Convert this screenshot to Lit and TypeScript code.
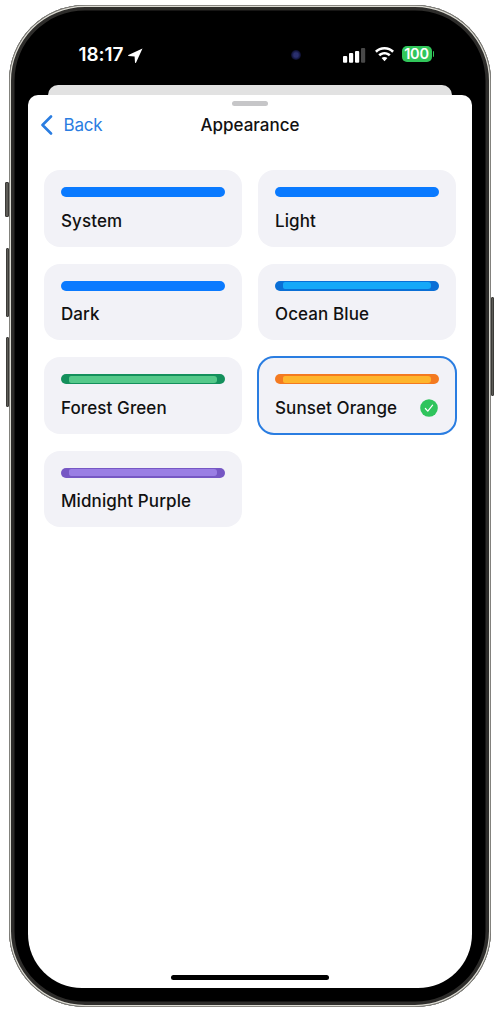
import { LitElement, html, css } from "lit";
import { customElement } from "lit/decorators.js";

type Theme = { name: string; outer: string; inner?: string; selected?: boolean };

const THEMES: Theme[] = [
  { name: "System", outer: "#0a7aff" },
  { name: "Light", outer: "#0a7aff" },
  { name: "Dark", outer: "#0a7aff" },
  { name: "Ocean Blue", outer: "#0a6fd6", inner: "#16a8f8" },
  { name: "Forest Green", outer: "#14905c", inner: "#55c98a" },
  { name: "Sunset Orange", outer: "#f47a20", inner: "#feb52c", selected: true },
  { name: "Midnight Purple", outer: "#7657c4", inner: "#9a7ee4" },
];

@customElement("app-root")
export class AppRoot extends LitElement {
  static styles = css`
    :host {
      display: block;
      width: 500px;
      height: 1013px;
      background: #fff;
      font-family: Inter, "Liberation Sans", sans-serif;
      overflow: hidden;
    }
    .stage {
      position: relative;
      width: 500px;
      height: 1013px;
      padding: 4.5px 9px 6px;
      box-sizing: border-box;
    }
    .phone {
      height: 100%;
      box-sizing: border-box;
      border-radius: 76px;
      background: #000;
      padding: 0 19px 19px;
      display: flex;
      flex-direction: column;
      box-shadow: inset 0 0 0 0.8px #6d6c68, inset 0 0 0 2px #dcdbd3, inset 0 0 0 5.5px #2e2d2b;
    }
    .side {
      position: absolute;
      background: #5c5b56;
      border: 1px solid #3c3b38;
      box-sizing: border-box;
      border-radius: 1px;
    }
    .btn-mute { left: 5px; top: 182px; width: 4px; height: 35px; }
    .btn-up { left: 6px; top: 248px; width: 3px; height: 69px; }
    .btn-down { left: 6px; top: 337px; width: 3px; height: 70px; }
    .btn-power { left: 491px; top: 297px; width: 3px; height: 99px; }
    .status {
      height: 80.5px;
      flex: none;
      display: flex;
      align-items: flex-start;
      padding-top: 40px;
      box-sizing: border-box;
      color: #fff;
    }
    .time {
      margin-left: 50.5px;
      width: 45.5px;
      font-size: 19px;
      line-height: 20px;
      font-weight: 600;
      letter-spacing: -0.1px;
    }
    .arrow { margin-left: 3.5px; margin-top: 3px; }
    .island { flex: 1; display: flex; justify-content: flex-end; padding-right: 42px; padding-top: 5px; }
    .cam { width: 10px; height: 10px; border-radius: 50%; background: radial-gradient(circle, #2a2f6e 0 30%, #0a0c2a 70%); }
    .signal { margin-top: 1px; }
    .wifi { margin-left: 8px; margin-top: 2px; }
    .battery {
      margin-left: 7px;
      margin-right: 40.5px;
      margin-top: 1.5px;
      width: 30px;
      height: 16px;
      border-radius: 5px;
      background: #31c65a;
      color: #fff;
      font-size: 14.5px;
      font-weight: 600;
      line-height: 16px;
      text-align: center;
      letter-spacing: -0.2px;
      position: relative;
    }
    .battery::after {
      content: "";
      position: absolute;
      right: -2.5px;
      top: 5px;
      width: 1.5px;
      height: 6px;
      border-radius: 0 1px 1px 0;
      background: #31c65a;
    }
    .sheet-back {
      flex: none;
      height: 10px;
      margin: 0 20px;
      background: #e2e2e2;
      border-radius: 10px 10px 0 0;
    }
    .screen {
      flex: 1;
      position: relative;
      background: #fff;
      border-radius: 10px 10px 54px 54px;
      display: flex;
      flex-direction: column;
      overflow: hidden;
    }
    .grabber {
      flex: none;
      width: 36px;
      height: 5px;
      border-radius: 3px;
      background: #c6c6c8;
      margin: 6px auto 0;
    }
    .nav {
      flex: none;
      height: 38px;
      display: grid;
      grid-template-columns: 1fr auto 1fr;
      align-items: center;
    }
    .back {
      display: flex;
      align-items: center;
      padding-left: 12px;
      gap: 10.5px;
      color: #2a7de1;
      font-size: 17px;
      line-height: 22px;
      letter-spacing: -0.2px;
    }
    .title {
      font-size: 17px;
      line-height: 22px;
      font-weight: 500;
      color: #111;
    }
    .grid {
      margin: 26px 16px 0;
      display: grid;
      grid-template-columns: 198px 198px;
      column-gap: 16px;
      row-gap: 17.17px;
    }
    .card {
      height: 76.5px;
      box-sizing: border-box;
      border-radius: 16px;
      background: #f2f2f7;
      padding: 17px 17px 0;
      display: flex;
      flex-direction: column;
    }
    .card.selected {
      outline: 2px solid #2a7de1;
      outline-offset: -1px;
    }
    .bar {
      height: 10px;
      border-radius: 5px;
      padding: 1.5px 8px;
      box-sizing: border-box;
      display: flex;
    }
    .bar i {
      display: block;
      flex: 1;
      border-radius: 2px 3px 3px 2px;
    }
    .row {
      margin-top: 12.5px;
      display: flex;
      align-items: center;
      justify-content: space-between;
      font-size: 17px;
      line-height: 22px;
      font-weight: 450;
      letter-spacing: 0.1px;
      color: #111;
    }
    .row svg { display: block; margin-right: 1px; }
    .spacer { flex: 1; }
    .home {
      flex: none;
      width: 158px;
      height: 5px;
      border-radius: 3px;
      background: #000;
      margin: 0 auto 8px;
    }
  `;

  private card(t: Theme) {
    return html`
      <div class="card ${t.selected ? "selected" : ""}">
        <div class="bar" style="background:${t.outer}">
          ${t.inner ? html`<i style="background:${t.inner}"></i>` : ""}
        </div>
        <div class="row">
          <span>${t.name}</span>
          ${t.selected
            ? html`<svg width="18" height="18" viewBox="0 0 18 18">
                <circle cx="9" cy="9" r="8.8" fill="#2fc45c"></circle>
                <path d="M5.4 9.5l2.4 2.6 4.8-6" fill="none" stroke="#fff" stroke-width="1.2" stroke-linecap="round" stroke-linejoin="round"></path>
              </svg>`
            : ""}
        </div>
      </div>
    `;
  }

  render() {
    return html`
      <div class="stage">
        <div class="side btn-mute"></div>
        <div class="side btn-up"></div>
        <div class="side btn-down"></div>
        <div class="side btn-power"></div>
        <div class="phone">
          <div class="status">
            <div class="time">18:17</div>
            <svg class="arrow" width="15" height="15" viewBox="0 0 15 15">
              <path d="M14.5 0.5L0.4 7c-.5.3-.4 1 .2 1.1l6 .3.4 6c.1.6.8.7 1.100.2z" fill="#fff"></path>
            </svg>
            <div class="island"><div class="cam"></div></div>
            <svg class="signal" width="23" height="17" viewBox="0 0 23 17">
              <rect x="0" y="10" width="4.2" height="6.700" rx="1" fill="#fff"></rect>
              <rect x="6" y="7" width="4.200" height="9.700" rx="1" fill="#fff"></rect>
              <rect x="12" y="5" width="4.200" height="11.700" rx="1" fill="#fff"></rect>
              <rect x="18" y="2" width="4.200" height="14.700" rx="1" fill="#484848"></rect>
            </svg>
            <svg class="wifi" width="21" height="16" viewBox="0 0 20 16" fill="#fff">
              <path d="M10 2.600c3 0 5.700 1.200 7.700 3.100l1.800-1.900C17 1.400 13.700 0 10 0S3 1.400.5 3.800l1.800 1.900C4.300 3.800 7 2.600 10 2.600z"></path>
              <path d="M10 7.500c1.700 0 3.200.6 4.400 1.700l1.800-1.900C14.600 5.800 12.400 4.900 10 4.900S5.400 5.800 3.800 7.300l1.800 1.900C6.800 8.100 8.300 7.500 10 7.500z"></path>
              <path d="M10 9.900c-1.100 0-2.100.4-2.900 1.100L10 14.200l2.900-3.200c-.8-.7-1.800-1.100-2.900-1.100z"></path>
            </svg>
            <div class="battery">100</div>
          </div>
          <div class="sheet-back"></div>
          <div class="screen">
            <div class="grabber"></div>
            <div class="nav">
              <div class="back">
                <svg width="13" height="20" viewBox="0 0 13 20">
                  <path d="M11 1.500L2.500 10l8.500 8.500" fill="none" stroke="#2a7de1" stroke-width="2.600" stroke-linecap="round" stroke-linejoin="round"></path>
                </svg>
                <span>Back</span>
              </div>
              <div class="title">Appearance</div>
              <div></div>
            </div>
            <div class="grid">${THEMES.map((t) => this.card(t))}</div>
            <div class="spacer"></div>
            <div class="home"></div>
          </div>
        </div>
      </div>
    `;
  }
}
